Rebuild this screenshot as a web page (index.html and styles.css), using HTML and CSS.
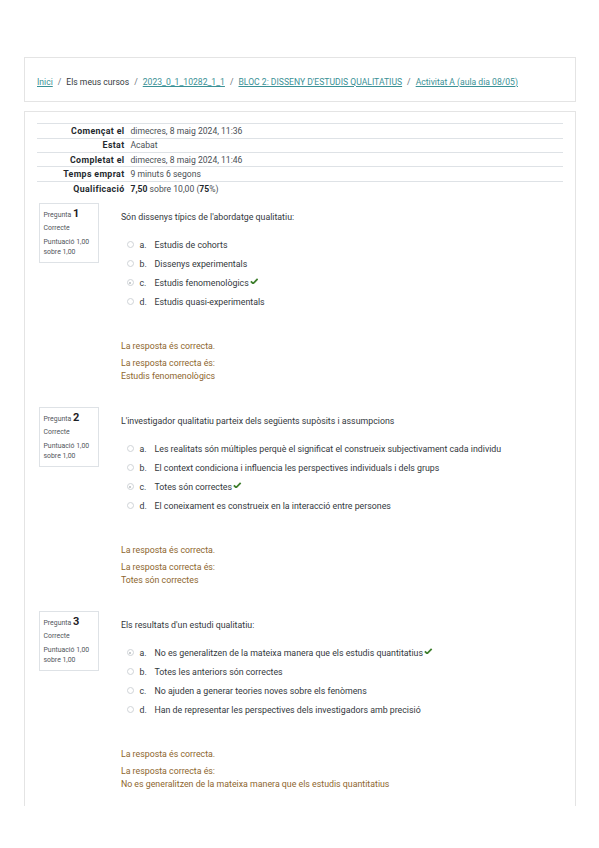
FILE: index.html
```html
<!DOCTYPE html>
<html lang="ca">
<head>
<meta charset="utf-8">
<title>Activitat A</title>
<link rel="stylesheet" href="styles.css">
</head>
<body>
<div class="page">
  <nav class="crumb-card">
    <ol class="crumbs">
      <li><a href="#">Inici</a></li>
      <li class="sep">/</li>
      <li>Els meus cursos</li>
      <li class="sep">/</li>
      <li><a href="#">2023_0_1_10282_1_1</a></li>
      <li class="sep">/</li>
      <li><a href="#">BLOC 2: DISSENY D'ESTUDIS QUALITATIUS</a></li>
      <li class="sep">/</li>
      <li><a href="#">Activitat A (aula dia 08/05)</a></li>
    </ol>
  </nav>

  <main class="main-card">
    <table class="summary">
      <tr><th>Començat el</th><td>dimecres, 8 maig 2024, 11:36</td></tr>
      <tr><th>Estat</th><td>Acabat</td></tr>
      <tr><th>Completat el</th><td>dimecres, 8 maig 2024, 11:46</td></tr>
      <tr><th>Temps emprat</th><td>9 minuts 6 segons</td></tr>
      <tr><th>Qualificació</th><td><b>7,50</b> sobre 10,00 (<b>75</b>%)</td></tr>
    </table>

    <section class="que">
      <div class="info">
        <div class="qno">Pregunta <b>1</b></div>
        <div class="state">Correcte</div>
        <div class="grade">Puntuació 1,00 sobre 1,00</div>
      </div>
      <div class="content">
        <div class="qtext">Són dissenys típics de l'abordatge qualitatiu:</div>
        <div class="answers">
          <div class="ans"><span class="radio"></span><span class="letter">a.</span><span>Estudis de cohorts</span></div>
          <div class="ans"><span class="radio"></span><span class="letter">b.</span><span>Dissenys experimentals</span></div>
          <div class="ans"><span class="radio checked"></span><span class="letter">c.</span><span>Estudis fenomenològics</span><svg class="tick" viewBox="0 0 10 8"><path d="M0.8 4.2 L3.6 6.8 L9.2 1" fill="none" stroke="#3f7f2e" stroke-width="2.2"/></svg></div>
          <div class="ans"><span class="radio"></span><span class="letter">d.</span><span>Estudis quasi-experimentals</span></div>
        </div>
        <div class="outcome">
          <p class="fb">La resposta és correcta.</p>
          <p class="right">La resposta correcta és:<br>Estudis fenomenològics</p>
        </div>
      </div>
    </section>

    <section class="que">
      <div class="info">
        <div class="qno">Pregunta <b>2</b></div>
        <div class="state">Correcte</div>
        <div class="grade">Puntuació 1,00 sobre 1,00</div>
      </div>
      <div class="content">
        <div class="qtext">L'investigador qualitatiu parteix dels següents supòsits i assumpcions</div>
        <div class="answers">
          <div class="ans"><span class="radio"></span><span class="letter">a.</span><span>Les realitats són múltiples perquè el significat el construeix subjectivament cada individu</span></div>
          <div class="ans"><span class="radio"></span><span class="letter">b.</span><span>El context condiciona i influencia les perspectives individuals i dels grups</span></div>
          <div class="ans"><span class="radio checked"></span><span class="letter">c.</span><span>Totes són correctes</span><svg class="tick" viewBox="0 0 10 8"><path d="M0.8 4.2 L3.6 6.8 L9.2 1" fill="none" stroke="#3f7f2e" stroke-width="2.2"/></svg></div>
          <div class="ans"><span class="radio"></span><span class="letter">d.</span><span>El coneixament es construeix en la interacció entre persones</span></div>
        </div>
        <div class="outcome">
          <p class="fb">La resposta és correcta.</p>
          <p class="right">La resposta correcta és:<br>Totes són correctes</p>
        </div>
      </div>
    </section>

    <section class="que">
      <div class="info">
        <div class="qno">Pregunta <b>3</b></div>
        <div class="state">Correcte</div>
        <div class="grade">Puntuació 1,00 sobre 1,00</div>
      </div>
      <div class="content">
        <div class="qtext">Els resultats d'un estudi qualitatiu:</div>
        <div class="answers">
          <div class="ans"><span class="radio checked"></span><span class="letter">a.</span><span>No es generalitzen de la mateixa manera que els estudis quantitatius</span><svg class="tick" viewBox="0 0 10 8"><path d="M0.8 4.2 L3.6 6.8 L9.2 1" fill="none" stroke="#3f7f2e" stroke-width="2.2"/></svg></div>
          <div class="ans"><span class="radio"></span><span class="letter">b.</span><span>Totes les anteriors són correctes</span></div>
          <div class="ans"><span class="radio"></span><span class="letter">c.</span><span>No ajuden a generar teories noves sobre els fenòmens</span></div>
          <div class="ans"><span class="radio"></span><span class="letter">d.</span><span>Han de representar les perspectives dels investigadors amb precisió</span></div>
        </div>
        <div class="outcome">
          <p class="fb">La resposta és correcta.</p>
          <p class="right">La resposta correcta és:<br>No es generalitzen de la mateixa manera que els estudis quantitatius</p>
        </div>
      </div>
    </section>
  </main>
</div>
</body>
</html>
```

FILE: styles.css
```css
html, body {
  margin: 0;
  padding: 0;
  background: #ffffff;
}

body {
  font-family: Roboto, "Liberation Sans", Arial, sans-serif;
  font-size: 8.8px;
  color: #33383d;
}

.page {
  padding: 57px 23px 0 24px;
}

.crumb-card {
  height: 45px;
  box-sizing: border-box;
  border: 1px solid #e4e4e4;
  display: flex;
  align-items: center;
  padding: 4px 12px 0 12px;
}

.crumbs {
  list-style: none;
  margin: 0;
  padding: 0;
  display: flex;
  gap: 4px;
  white-space: nowrap;
  color: #343a40;
  font-size: 8.6px;
}

.crumbs a {
  color: #3a9196;
  text-decoration: underline;
}

.crumbs .sep {
  color: #6a737b;
  padding: 0 1px;
}

.main-card {
  margin-top: 9px;
  height: 695px;
  box-sizing: border-box;
  border: 1px solid #e4e4e4;
  border-bottom: none;
  padding: 11.3px 12px 0 12px;
}

.summary {
  width: 100%;
  border-collapse: collapse;
  margin-bottom: 8px;
}

.summary th,
.summary td {
  border-top: 1px solid #dee2e6;
  height: 13.4px;
  padding: 0;
  line-height: 12px;
  vertical-align: middle;
}

.summary th {
  width: 87.5px;
  padding-right: 3px;
  text-align: right;
  font-weight: 700;
  letter-spacing: 0.35px;
  color: #24292e;
}

.summary td {
  padding-left: 3px;
  text-align: left;
  color: #4a4f55;
  font-size: 8.6px;
}

.summary td b {
  color: #24292e;
}

.que {
  display: flex;
  height: 204px;
}

.info {
  flex: none;
  width: 60px;
  height: 60px;
  box-sizing: border-box;
  border: 1px solid #dee2e6;
  padding: 4px 3px 0 4px;
  font-size: 6.9px;
  color: #50555b;
  margin-left: 1.5px;
}

.qno {
  line-height: 11px;
}

.qno b {
  font-size: 11px;
  font-weight: 700;
  color: #1d2125;
}

.state {
  margin-top: 2px;
  line-height: 10px;
}

.grade {
  margin-top: 4px;
  line-height: 10px;
}

.content {
  margin-left: 22.4px;
  padding-top: 8px;
  flex: 1;
}

.qtext {
  line-height: 12px;
}

.answers {
  margin-top: 12.2px;
  padding-left: 5.8px;
}

.ans {
  display: flex;
  align-items: center;
  height: 19px;
  white-space: nowrap;
}

.radio {
  width: 7px;
  height: 7px;
  box-sizing: border-box;
  border: 1px solid #cfd3d7;
  border-radius: 50%;
  margin-right: 5.8px;
  display: flex;
  align-items: center;
  justify-content: center;
  flex: none;
}

.radio.checked::after {
  content: "";
  width: 2.4px;
  height: 2.4px;
  border-radius: 50%;
  background: #b7bcc1;
}

.letter {
  width: 15px;
  flex: none;
}

.tick {
  width: 8.5px;
  height: 6.5px;
  margin-left: 1px;
  margin-top: -4px;
}

.outcome {
  margin-top: 28.2px;
  color: #8e662e;
}

.outcome p {
  margin: 0;
}

.outcome .fb {
  line-height: 12px;
}

.outcome .right {
  margin-top: 5.3px;
  line-height: 12.7px;
}
```
